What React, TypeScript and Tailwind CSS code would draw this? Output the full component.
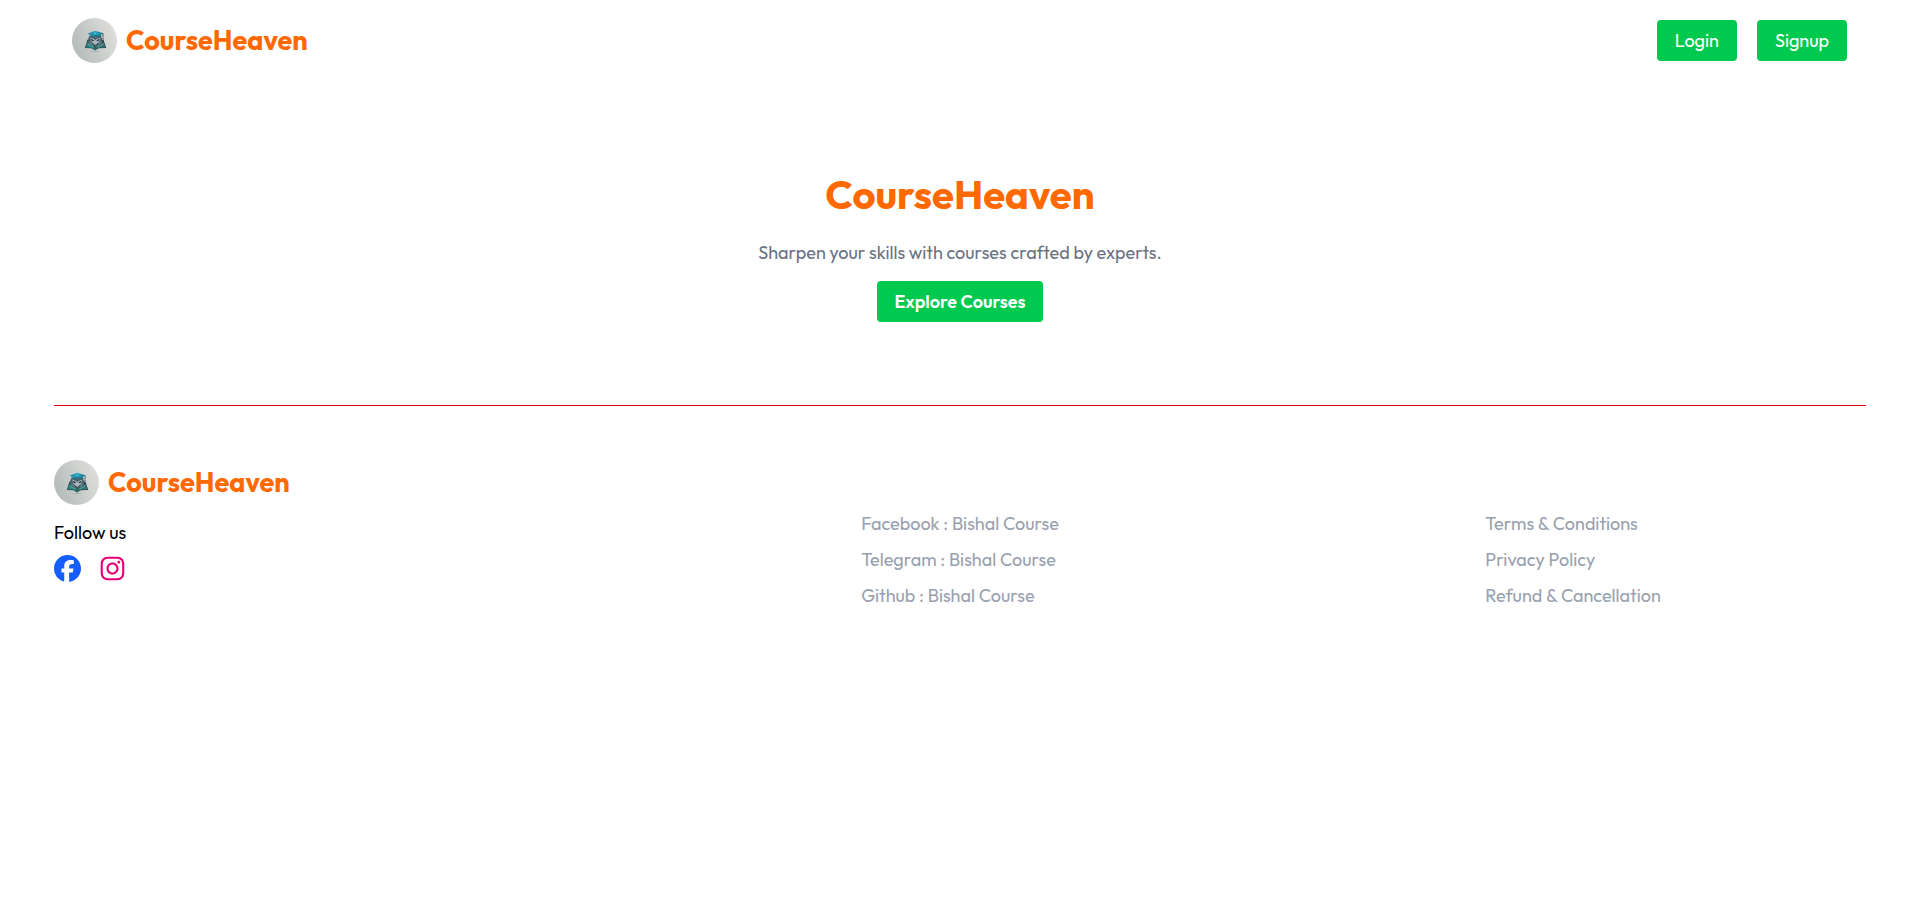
import type { ReactNode } from 'react';
import { FaFacebook, FaInstagram } from 'react-icons/fa6';

function Logo() {
  return (
    <svg viewBox="0 0 45 45" className="size-[45px] shrink-0" role="img" aria-label="CourseHeaven logo">
      <defs>
        <linearGradient id="disc" x1="0" y1="0.7" x2="1" y2="0.3">
          <stop offset="0" stopColor="#b3bab9" />
          <stop offset="0.5" stopColor="#c9cdca" />
          <stop offset="1" stopColor="#dfdfdd" />
        </linearGradient>
        <linearGradient id="cap" x1="0" y1="0" x2="1" y2="0">
          <stop offset="0" stopColor="#1b7f96" />
          <stop offset="0.5" stopColor="#2aa9c0" />
          <stop offset="1" stopColor="#17677f" />
        </linearGradient>
      </defs>
      <circle cx="22.5" cy="22.5" r="22.5" fill="url(#disc)" />
      <ellipse cx="23" cy="33.5" rx="5" ry="0.6" fill="#a9afae" />
      <path d="M15.5 21.5 12.8 30l6.7.3 3.5 2.2 3.8-2.2 7.400-.3-2.800-8.500-7.500 3z" fill="#2b414e" />
      <path d="m15.5 24-2 5.500 6 .2 3.500 2.300v-4.500z" fill="#24847a" />
      <path d="m31 24 2.500 5.500-6.500.2-4 2.300v-4.500z" fill="#2f746f" />
      <path d="M17.500 17.500h11.500l1.200 4-2.800 5-4.400 2.500-4.200-2.500-2.800-5z" fill="#4b5f6c" />
      <path d="m18 19.500 4 1.600 1.300 1.200 1.300-1.200 4-1.600-1.500 4.500-3.800 3-3.700-3z" fill="#a9b7bb" />
      <path d="m18.500 20.500 3.800 2-2 .7zM28 20.500l-3.800 2 2 .7z" fill="#182835" />
      <path d="m16.500 23.500 5.500 4M30 23.500l-5.500 4M15.500 26l6 3M31.500 26l-6 3" stroke="#a4b6b7" strokeWidth="0.6" />
      <path d="m23 27v4M20.500 25l1.500 3M26 25l-1.500 3" stroke="#1b2d38" strokeWidth="0.6" />
      <path d="M15.500 15.700 23 12.800l8.500 2.500-2.500 1.500v2.400q-5.700-2-10.500 0v-2.300z" fill="url(#cap)" />
      <path d="M18.500 18.400q5-1.800 10.500 0" stroke="#175d70" strokeWidth="0.8" fill="none" />
      <path d="m22.500 14.500 1.300.5-.8.8z" fill="#a9eef0" />
      <path d="M31 15.500v4M31 20v1.500" stroke="#344a56" strokeWidth="0.9" />
    </svg>
  );
}

function Brand() {
  return (
    <div className="flex items-center gap-[9px]">
      <Logo />
      <span className="text-[27px] leading-[35px] font-bold text-[#ff6900]">CourseHeaven</span>
    </div>
  );
}

function ButtonLink({ children }: { children: ReactNode }) {
  return (
    <a href="#" className="rounded bg-[#00c950] px-[18px] py-[7px] text-lg leading-[27px] text-white">
      {children}
    </a>
  );
}

function LinkList({ items }: { items: string[] }) {
  return (
    <ul className="space-y-[9px] text-lg leading-[27px] text-[#99a1af]">
      {items.map((item) => (
        <li key={item}>
          <a href="#">{item}</a>
        </li>
      ))}
    </ul>
  );
}

export default function App() {
  return (
    <div className="min-h-screen bg-white pr-[42px] pl-[54px] font-['Outfit','Lato',sans-serif] text-black">
      <header className="flex items-center justify-between py-[18px] pr-[19px] pl-[18px]">
        <Brand />
        <nav className="flex gap-5">
          <ButtonLink>Login</ButtonLink>
          <ButtonLink>Signup</ButtonLink>
        </nav>
      </header>
      <main className="flex flex-col items-center pt-[90px] pb-[83px] text-center">
        <h1 className="text-[40px] leading-[46px] font-bold text-[#ff6900]">CourseHeaven</h1>
        <p className="mt-[22px] text-lg leading-[27px] text-[#6a7282]">
          Sharpen your skills with courses crafted by experts.
        </p>
        <button
          type="button"
          className="mt-[15px] rounded bg-[#00c950] px-[18px] py-[7px] text-lg leading-[27px] font-semibold text-white"
        >
          Explore Courses
        </button>
      </main>
      <hr className="border-t border-[#de0009]" />
      <footer className="grid grid-cols-3 pt-[54px] pb-9">
        <div>
          <Brand />
          <p className="mt-[14px] text-lg leading-[27px]">Follow us</p>
          <div className="mt-[9px] flex gap-[18px]">
            <a href="#" aria-label="Facebook">
              <FaFacebook className="size-[27px] text-[#155dfc]" />
            </a>
            <a href="#" aria-label="Instagram">
              <FaInstagram className="size-[27px] text-[#e60076]" />
            </a>
          </div>
        </div>
        <div className="flex justify-center pt-[50px]">
          <LinkList items={['Facebook : Bishal Course', 'Telegram : Bishal Course', 'Github : Bishal Course']} />
        </div>
        <div className="flex justify-center pt-[50px] pl-[18px]">
          <LinkList items={['Terms & Conditions', 'Privacy Policy', 'Refund & Cancellation']} />
        </div>
      </footer>
    </div>
  );
}
